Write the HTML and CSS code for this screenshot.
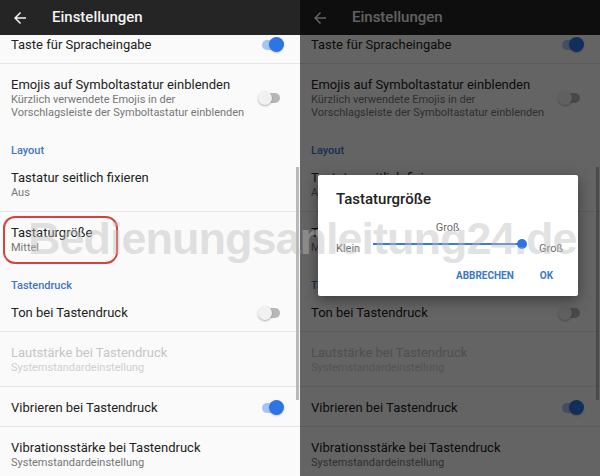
FILE: index.html
```html
<!DOCTYPE html>
<html lang="de">
<head>
  <meta charset="UTF-8">
  <title>Einstellungen – Tastaturgröße</title>
  <meta name="viewport" content="width=device-width, initial-scale=1.0" />
  <link rel="stylesheet" href="styles.css">
</head>
<body>
  <div class="screen">
    <section class="panel">
      <header class="appbar">
        <svg class="back" viewBox="0 0 24 24" width="18" height="18"><path d="M20 11H7.83l5.59-5.59L12 4l-8 8 8 8 1.41-1.41L7.83 13H20v-2z" fill="currentColor"/></svg>
        <span class="appbar-title">Einstellungen</span>
      </header>
      <div class="viewport">
        <div class="list">
          <div class="row">
            <div class="text"><div class="title">Taste für Spracheingabe</div></div>
            <span class="toggle on"></span>
          </div>
          <div class="row last">
            <div class="text">
              <div class="title">Emojis auf Symboltastatur einblenden</div>
              <div class="sub">Kürzlich verwendete Emojis in der<br>Vorschlagsleiste der Symboltastatur einblenden</div>
            </div>
            <span class="toggle"></span>
          </div>
          <div class="category">Layout</div>
          <div class="row">
            <div class="text">
              <div class="title">Tastatur seitlich fixieren</div>
              <div class="sub">Aus</div>
            </div>
          </div>
          <div class="row last">
            <div class="text">
              <div class="title">Tastaturgröße</div>
              <div class="sub">Mittel</div>
            </div>
            <span class="mark"></span>
          </div>
          <div class="category">Tastendruck</div>
          <div class="row">
            <div class="text"><div class="title">Ton bei Tastendruck</div></div>
            <span class="toggle"></span>
          </div>
          <div class="row disabled">
            <div class="text">
              <div class="title">Lautstärke bei Tastendruck</div>
              <div class="sub">Systemstandardeinstellung</div>
            </div>
          </div>
          <div class="row">
            <div class="text"><div class="title">Vibrieren bei Tastendruck</div></div>
            <span class="toggle on"></span>
          </div>
          <div class="row">
            <div class="text">
              <div class="title">Vibrationsstärke bei Tastendruck</div>
              <div class="sub">Systemstandardeinstellung</div>
            </div>
          </div>
        </div>
      </div>
      <div class="scrollbar"></div>
    </section>

    <section class="panel">
      <header class="appbar">
        <svg class="back" viewBox="0 0 24 24" width="18" height="18"><path d="M20 11H7.83l5.59-5.59L12 4l-8 8 8 8 1.41-1.41L7.83 13H20v-2z" fill="currentColor"/></svg>
        <span class="appbar-title">Einstellungen</span>
      </header>
      <div class="viewport">
        <div class="list">
          <div class="row">
            <div class="text"><div class="title">Taste für Spracheingabe</div></div>
            <span class="toggle on"></span>
          </div>
          <div class="row last">
            <div class="text">
              <div class="title">Emojis auf Symboltastatur einblenden</div>
              <div class="sub">Kürzlich verwendete Emojis in der<br>Vorschlagsleiste der Symboltastatur einblenden</div>
            </div>
            <span class="toggle"></span>
          </div>
          <div class="category">Layout</div>
          <div class="row">
            <div class="text">
              <div class="title">Tastatur seitlich fixieren</div>
              <div class="sub">Aus</div>
            </div>
          </div>
          <div class="row last">
            <div class="text">
              <div class="title">Tastaturgröße</div>
              <div class="sub">Mittel</div>
            </div>
          </div>
          <div class="category">Tastendruck</div>
          <div class="row">
            <div class="text"><div class="title">Ton bei Tastendruck</div></div>
            <span class="toggle"></span>
          </div>
          <div class="row disabled">
            <div class="text">
              <div class="title">Lautstärke bei Tastendruck</div>
              <div class="sub">Systemstandardeinstellung</div>
            </div>
          </div>
          <div class="row">
            <div class="text"><div class="title">Vibrieren bei Tastendruck</div></div>
            <span class="toggle on"></span>
          </div>
          <div class="row">
            <div class="text">
              <div class="title">Vibrationsstärke bei Tastendruck</div>
              <div class="sub">Systemstandardeinstellung</div>
            </div>
          </div>
        </div>
      </div>
      <div class="scrollbar"></div>
      <div class="scrim"></div>
      <div class="dialog">
        <div class="dialog-title">Tastaturgröße</div>
        <div class="slider">
          <span class="value">Groß</span>
          <span class="end min">Klein</span>
          <div class="track"><span class="thumb"></span></div>
          <span class="end max">Groß</span>
        </div>
        <div class="actions">
          <span class="btn">ABBRECHEN</span>
          <span class="btn">OK</span>
        </div>
      </div>
    </section>

    <div class="watermark">Bedienungsanleitung24.de</div>
  </div>
</body>
</html>
```

FILE: styles.css
```css
body {
  margin: 0;
  padding: 0;
  font-family: Roboto, 'Noto Sans', sans-serif;
  background: #fafafa;
  color: #212121;
}

.screen {
  position: relative;
  display: flex;
  width: 600px;
  height: 476px;
  overflow: hidden;
}

.panel {
  position: relative;
  width: 300px;
  height: 476px;
  background: #fafafa;
  overflow: hidden;
  display: flex;
  flex-direction: column;
}

.appbar {
  position: relative;
  z-index: 1;
  flex: 0 0 35px;
  display: flex;
  align-items: center;
  padding-left: 11px;
  background: #252525;
  color: #f2f2f2;
}

.back {
  display: block;
}

.appbar-title {
  margin-left: 23px;
  margin-top: -2px;
  font-size: 15px;
  font-weight: 500;
}

.viewport {
  flex: 1;
  overflow: hidden;
}

.list {
  margin-top: -11px;
}

.row {
  position: relative;
  display: flex;
  align-items: center;
  padding: 12px 16px 10px 11px;
  border-bottom: 1px solid #e6e6e6;
}

.row:has(.sub) {
  padding-bottom: 12px;
}

.row.last {
  border-bottom: 0;
  padding-bottom: 12px;
}

.row.last:has(.sub) {
  padding-bottom: 13px;
}

.text {
  flex: 1;
}

.title {
  font-size: 13px;
  line-height: 17px;
  color: #222;
}

.sub {
  font-size: 11px;
  line-height: 13px;
  color: #777;
}

.disabled .title { color: #c6c6c6; }
.disabled .sub { color: #d0d0d0; }

.category {
  padding: 13px 11px 0;
  font-size: 11px;
  line-height: 12px;
  font-weight: 500;
  color: #3f76c4;
}

.toggle {
  position: relative;
  width: 26px;
  height: 16px;
  flex: none;
}

.toggle::before {
  content: "";
  position: absolute;
  left: 4px;
  right: 4px;
  top: 3px;
  height: 10px;
  border-radius: 5px;
  background: #b7b7b7;
}

.toggle::after {
  content: "";
  position: absolute;
  left: 0;
  top: 1px;
  width: 14px;
  height: 14px;
  border-radius: 50%;
  background: #f1f1f1;
  box-shadow: 0 1px 2px rgba(0, 0, 0, 0.3);
}

.toggle.on::before { background: #a7c5f3; }

.toggle.on::after {
  left: auto;
  right: 0;
  top: 0;
  width: 15px;
  height: 15px;
  background: #2d74e6;
  box-shadow: 0 1px 2px rgba(0, 0, 0, 0.2);
}

.mark {
  position: absolute;
  left: 3px;
  top: 4px;
  width: 115px;
  height: 48px;
  box-sizing: border-box;
  border: 2.5px solid #d8423e;
  border-radius: 12px;
}

.scrollbar {
  position: absolute;
  right: 1px;
  top: 167px;
  width: 3px;
  height: 233px;
  background: #b9b9b9;
}

.scrim {
  position: absolute;
  inset: 0;
  z-index: 2;
  background: rgba(0, 0, 0, 0.6);
}

.dialog {
  position: absolute;
  z-index: 3;
  left: 18px;
  top: 175px;
  width: 260px;
  height: 121px;
  box-sizing: border-box;
  padding: 14px 15px 0 18px;
  background: #fff;
  border-radius: 2px;
  box-shadow: 0 4px 14px rgba(0, 0, 0, 0.4);
}

.dialog-title {
  font-size: 15px;
  font-weight: 500;
  line-height: 20px;
  color: #222;
}

.slider {
  display: grid;
  grid-template-columns: auto 1fr auto;
  column-gap: 13px;
  align-items: start;
  margin-top: 12px;
  font-size: 11px;
  color: #6b6b6b;
}

.slider .value {
  grid-row: 1;
  grid-column: 2;
  justify-self: center;
  line-height: 13px;
  margin-left: -4px;
}

.slider .end {
  grid-row: 2;
  line-height: 13px;
  margin-top: 8px;
}

.slider .min { grid-column: 1; }
.slider .max { grid-column: 3; }

.track {
  grid-row: 2;
  grid-column: 2;
  position: relative;
  height: 2px;
  margin-top: 9px;
  margin-right: 4px;
  background: #3f7bd6;
}

.thumb {
  position: absolute;
  right: -5px;
  top: -4px;
  width: 10px;
  height: 10px;
  border-radius: 50%;
  background: #2f74e0;
}

.actions {
  display: flex;
  justify-content: flex-end;
  gap: 26px;
  margin-top: 14px;
  padding-right: 10px;
}

.btn {
  font-size: 10px;
  line-height: 14px;
  font-weight: 700;
  color: #3c77c9;
}

.watermark {
  position: absolute;
  z-index: 5;
  left: 28px;
  top: 216px;
  font-family: 'Liberation Sans', Arial, sans-serif;
  font-size: 45px;
  line-height: 45px;
  font-weight: 700;
  letter-spacing: -1px;
  color: rgba(190, 190, 190, 0.45);
  white-space: nowrap;
  pointer-events: none;
}
```
